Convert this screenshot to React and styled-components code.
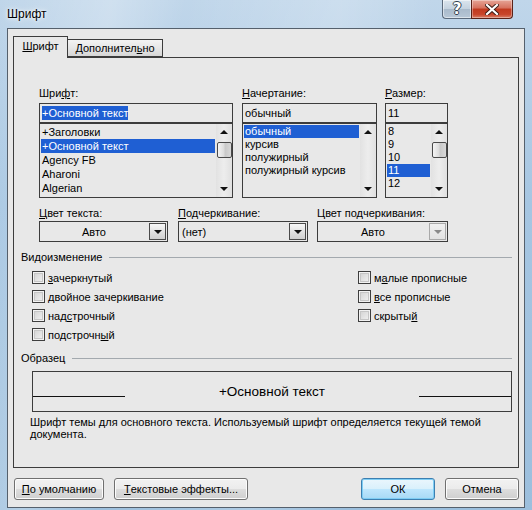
import React from "react";
import styled, { createGlobalStyle, css } from "styled-components";

const GlobalStyle = createGlobalStyle`
  html, body {
    margin: 0;
    padding: 0;
  }
  body {
    font-family: "Liberation Sans", Arial, sans-serif;
    font-size: 11px;
    color: #000;
  }
  * {
    box-sizing: border-box;
  }
`;

const BG = "#e8e8e8";
const DARK = "#3c3c3c";
const SEL = "#1f5fd3";

const fonts = ["+Заголовки", "+Основной текст", "Agency FB", "Aharoni", "Algerian"];
const styles = ["обычный", "курсив", "полужирный", "полужирный курсив"];
const sizes = ["8", "9", "10", "11", "12"];

const leftChecks = [
  ["", "з", "ачеркнутый"],
  ["", "д", "войное зачеркивание"],
  ["над", "с", "трочный"],
  ["подстрочн", "ы", "й"],
];
const rightChecks = [
  ["м", "а", "лые прописные"],
  ["", "в", "се прописные"],
  ["скрыты", "й", ""],
];

const Mn = ({ pre, key_, post }) => (
  <>
    {pre}
    <u>{key_}</u>
    {post}
  </>
);

const App = () => {
  return (
    <>
      <GlobalStyle />
      <Window>
        <TitleBar>
          <Title>Шрифт</Title>
          <CaptionButtons>
            <HelpButton>?</HelpButton>
            <CloseButton>
              <svg width="14" height="11" viewBox="0 0 14 11">
                <path
                  d="M2 1 L12 10 M12 1 L2 10"
                  stroke="#3a1a14"
                  strokeWidth="4"
                  strokeLinecap="square"
                />
                <path
                  d="M2 1 L12 10 M12 1 L2 10"
                  stroke="#fff"
                  strokeWidth="2.2"
                  strokeLinecap="square"
                />
              </svg>
            </CloseButton>
          </CaptionButtons>
        </TitleBar>

        <Client>
          <TabStrip>
            <Tab active>
              <u>Ш</u>рифт
            </Tab>
            <Tab>
              Дополнител<u>ь</u>но
            </Tab>
          </TabStrip>

          <Panel>
            <FontRow>
              <Column width={194}>
                <Label>
                  Шри<u>ф</u>т:
                </Label>
                <TextBox>
                  <Highlighted>+Основной текст</Highlighted>
                </TextBox>
                <ListBox>
                  <Items>
                    {fonts.map((f, i) => (
                      <Item key={f} selected={i === 1} rowHeight={14}>
                        {f}
                      </Item>
                    ))}
                  </Items>
                  <ScrollBar thumb />
                </ListBox>
              </Column>
              <Column width={135} gap={9}>
                <Label>
                  <u>Н</u>ачертание:
                </Label>
                <TextBox>обычный</TextBox>
                <ListBox>
                  <Items>
                    {styles.map((s, i) => (
                      <Item key={s} selected={i === 0} rowHeight={13}>
                        {s}
                      </Item>
                    ))}
                  </Items>
                  <ScrollBar />
                </ListBox>
              </Column>
              <Column width={63} gap={8}>
                <Label>
                  <u>Р</u>азмер:
                </Label>
                <TextBox>11</TextBox>
                <ListBox>
                  <Items>
                    {sizes.map((s) => (
                      <Item key={s} selected={s === "11"} rowHeight={13}>
                        {s}
                      </Item>
                    ))}
                  </Items>
                  <ScrollBar thumb />
                </ListBox>
              </Column>
            </FontRow>

            <ComboRow>
              <Column width={129}>
                <Label tight>
                  <u>Ц</u>вет текста:
                </Label>
                <Combo>
                  <ComboValue center>Авто</ComboValue>
                  <ComboArrow>
                    <Triangle />
                  </ComboArrow>
                </Combo>
              </Column>
              <Column width={130} gap={10}>
                <Label tight>
                  <u>П</u>одчеркивание:
                </Label>
                <Combo>
                  <ComboValue>(нет)</ComboValue>
                  <ComboArrow>
                    <Triangle />
                  </ComboArrow>
                </Combo>
              </Column>
              <Column width={131} gap={9}>
                <Label tight>Цвет подчеркивания:</Label>
                <Combo>
                  <ComboValue center>Авто</ComboValue>
                  <ComboArrow disabled>
                    <Triangle disabled />
                  </ComboArrow>
                </Combo>
              </Column>
            </ComboRow>

            <GroupHeader top={9}>
              <span>Видоизменение</span>
              <GroupLine />
            </GroupHeader>

            <Checks>
              <CheckColumn>
                {leftChecks.map(([a, b, c]) => (
                  <CheckRow key={a + b + c}>
                    <CheckBox />
                    <Mn pre={a} key_={b} post={c} />
                  </CheckRow>
                ))}
              </CheckColumn>
              <CheckColumn>
                {rightChecks.map(([a, b, c]) => (
                  <CheckRow key={a + b + c}>
                    <CheckBox />
                    <Mn pre={a} key_={b} post={c} />
                  </CheckRow>
                ))}
              </CheckColumn>
            </Checks>

            <GroupHeader top={8}>
              <span>Образец</span>
              <GroupLine />
            </GroupHeader>

            <Preview>
              <PreviewLine />
              <PreviewText>+Основной текст</PreviewText>
              <PreviewLine />
            </Preview>

            <Description>
              Шрифт темы для основного текста. Используемый шрифт определяется текущей темой
              <br />
              документа.
            </Description>
          </Panel>

          <ButtonRow>
            <Button width={90}>
              <u>П</u>о умолчанию
            </Button>
            <Button width={134}>
              <u>Т</u>екстовые эффекты...
            </Button>
            <Spacer />
            <Button width={74} primary>
              ОК
            </Button>
            <Button width={74}>Отмена</Button>
          </ButtonRow>
        </Client>
      </Window>
    </>
  );
};

export default App;

const Window = styled.div`
  width: 532px;
  height: 510px;
  display: flex;
  flex-direction: column;
  padding: 0 7px 2px 7px;
  background: linear-gradient(
      100deg,
      rgba(255, 255, 255, 0) 0%,
      rgba(255, 255, 255, 0.25) 18%,
      rgba(255, 255, 255, 0) 30%,
      rgba(255, 255, 255, 0.2) 55%,
      rgba(255, 255, 255, 0) 70%
    ),
    linear-gradient(to bottom, #c0d6ea 0%, #a6c6e2 40%, #9cbfdd 100%);
`;

const TitleBar = styled.div`
  height: 28px;
  display: flex;
  align-items: flex-start;
  justify-content: space-between;
  margin-right: 12px;
`;

const Title = styled.div`
  font-size: 12px;
  line-height: 14px;
  padding-top: 7px;
  color: #000;
  text-shadow: 0 0 6px rgba(255, 255, 255, 0.9), 0 0 3px #fff;
`;

const CaptionButtons = styled.div`
  display: flex;
  height: 19px;
`;

const captionBase = css`
  height: 19px;
  display: flex;
  align-items: center;
  justify-content: center;
  border: 1px solid #5b6a7c;
  border-top: none;
  font-weight: bold;
`;

const HelpButton = styled.div`
  ${captionBase};
  width: 29px;
  border-bottom-left-radius: 4px;
  border-right: none;
  background: linear-gradient(to bottom, #dbe5ee 0%, #c4d2df 50%, #a9bacb 51%, #b7c7d6 100%);
  color: #fff;
  font-size: 15px;
  font-family: "DejaVu Sans", sans-serif;
  text-shadow: -1px 0 #33404e, 1px 0 #33404e, 0 -1px #33404e, 0 1px #33404e;
  box-shadow: inset 0 0 0 1px rgba(255, 255, 255, 0.5);
`;

const CloseButton = styled.div`
  ${captionBase};
  width: 42px;
  border-color: #5a2219;
  border-bottom-right-radius: 4px;
  background: linear-gradient(to bottom, #e6a597 0%, #d6705d 45%, #c0391f 50%, #c8452b 80%, #d8806a 100%);
  box-shadow: inset 0 0 0 1px rgba(255, 255, 255, 0.35);
`;

const Client = styled.div`
  flex: 1;
  display: flex;
  flex-direction: column;
  background: ${BG};
  border: 1px solid #55606c;
  padding: 7px 5px 7px 5px;
`;

const TabStrip = styled.div`
  height: 21px;
  display: flex;
  align-items: flex-end;
  position: relative;
  z-index: 1;
`;

const Tab = styled.div`
  height: ${(p) => (p.active ? 22 : 18)}px;
  margin-bottom: ${(p) => (p.active ? -1 : 0)}px;
  width: ${(p) => (p.active ? 55 : 95)}px;
  border: 1px solid ${DARK};
  border-bottom: ${(p) => (p.active ? "none" : `1px solid ${DARK}`)};
  border-left: ${(p) => (p.active ? `1px solid ${DARK}` : "none")};
  background: ${(p) =>
    p.active ? BG : "linear-gradient(to bottom, #f3f3f3 0%, #e6e6e6 50%, #d6d6d6 100%)"};
  display: flex;
  align-items: center;
  justify-content: center;
  padding-bottom: ${(p) => (p.active ? 2 : 0)}px;
  line-height: 13px;
`;

const Panel = styled.div`
  height: 411px;
  border: 1px solid ${DARK};
  display: flex;
  flex-direction: column;
  padding: 29px 6px 0 7px;
`;

const FontRow = styled.div`
  display: flex;
  margin-left: 18px;
`;

const ComboRow = styled.div`
  display: flex;
  margin-left: 18px;
  margin-top: 9px;
`;

const Column = styled.div`
  width: ${(p) => p.width}px;
  margin-left: ${(p) => p.gap || 0}px;
  display: flex;
  flex-direction: column;
`;

const Label = styled.div`
  line-height: 13px;
  height: 13px;
  margin-bottom: ${(p) => (p.tight ? 1 : 3)}px;
  white-space: nowrap;
`;

const TextBox = styled.div`
  height: 20px;
  border: 1px solid ${DARK};
  display: flex;
  align-items: center;
  padding-left: 2px;
  white-space: nowrap;
`;

const Highlighted = styled.span`
  background: ${SEL};
  color: #fff;
  line-height: 14px;
`;

const ListBox = styled.div`
  height: 75px;
  border: 1px solid ${DARK};
  display: flex;
  overflow: hidden;
`;

const Items = styled.div`
  flex: 1;
  padding: 1px 1px 0 1px;
  display: flex;
  flex-direction: column;
  overflow: hidden;
`;

const Item = styled.div`
  height: ${(p) => p.rowHeight}px;
  line-height: ${(p) => p.rowHeight}px;
  padding-left: 1px;
  white-space: nowrap;
  background: ${(p) => (p.selected ? SEL : "transparent")};
  color: ${(p) => (p.selected ? "#fff" : "#000")};
  flex-shrink: 0;
`;

const ScrollBarTrack = styled.div`
  width: 16px;
  display: flex;
  flex-direction: column;
  align-items: center;
  background: linear-gradient(to right, #e2e2e2, #ededed 50%, #e0e0e0);
`;

const ArrowCell = styled.div`
  height: 16px;
  width: 100%;
  display: flex;
  align-items: center;
  justify-content: center;
`;

const ArrowUp = styled.div`
  width: 0;
  height: 0;
  border-left: 4px solid transparent;
  border-right: 4px solid transparent;
  border-bottom: 4px solid #111;
`;

const Triangle = styled.div`
  width: 0;
  height: 0;
  border-left: 4px solid transparent;
  border-right: 4px solid transparent;
  border-top: 4px solid ${(p) => (p.disabled ? "#8a8a8a" : "#111")};
`;

const Thumb = styled.div`
  width: 15px;
  height: 16px;
  border: 1px solid #4a4a4a;
  border-radius: 2px;
  background: linear-gradient(to right, #f4f4f4, #dcdcdc 45%, #c9c9c9 55%, #d8d8d8);
  margin-top: 2px;
`;

const ScrollGap = styled.div`
  flex: 1;
`;

const ScrollBar = ({ thumb }) => (
  <ScrollBarTrack>
    <ArrowCell>
      <ArrowUp />
    </ArrowCell>
    {thumb && <Thumb />}
    <ScrollGap />
    <ArrowCell>
      <Triangle />
    </ArrowCell>
  </ScrollBarTrack>
);

const Combo = styled.div`
  height: 21px;
  border: 1px solid ${DARK};
  display: flex;
`;

const ComboValue = styled.div`
  flex: 1;
  display: flex;
  align-items: center;
  justify-content: ${(p) => (p.center ? "center" : "flex-start")};
  padding-left: ${(p) => (p.center ? 0 : 3)}px;
`;

const ComboArrow = styled.div`
  width: 17px;
  margin: 1px;
  border: 1px solid ${(p) => (p.disabled ? "#a9a9a9" : "#4a4a4a")};
  background: ${(p) =>
    p.disabled
      ? "linear-gradient(to bottom, #f0f0f0, #e2e2e2)"
      : "linear-gradient(to bottom, #f6f6f6 0%, #e2e2e2 50%, #cfcfcf 100%)"};
  display: flex;
  align-items: center;
  justify-content: center;
`;

const GroupHeader = styled.div`
  display: flex;
  align-items: center;
  margin-top: ${(p) => p.top}px;
  line-height: 13px;
  height: 13px;
`;

const GroupLine = styled.div`
  flex: 1;
  height: 1px;
  background: #a3a9ae;
  margin-left: 7px;
`;

const Checks = styled.div`
  display: flex;
  margin-top: 4px;
  margin-left: 11px;
`;

const CheckColumn = styled.div`
  display: flex;
  flex-direction: column;
  &:first-child {
    width: 326px;
  }
`;

const CheckRow = styled.div`
  height: 19px;
  display: flex;
  align-items: center;
  white-space: nowrap;
`;

const CheckBox = styled.div`
  width: 13px;
  height: 13px;
  border: 1px solid #3e3e3e;
  margin-right: 3px;
  background: linear-gradient(135deg, #cfcfcf, #f5f5f5);
  box-shadow: inset 0 0 0 1px #f2f2f2, inset 0 0 0 2px #c6c6c6;
`;

const Preview = styled.div`
  height: 41px;
  margin-top: 6px;
  margin-left: 11px;
  border: 1px solid ${DARK};
  display: flex;
  align-items: center;
`;

const PreviewLine = styled.div`
  width: 92px;
  height: 1px;
  background: #111;
  margin-top: 10px;
`;

const PreviewText = styled.div`
  flex: 1;
  text-align: center;
  font-size: 13.5px;
  line-height: 16px;
`;

const Description = styled.div`
  margin-top: 4px;
  margin-left: 9px;
  line-height: 12px;
  white-space: nowrap;
`;

const ButtonRow = styled.div`
  display: flex;
  margin-top: 10px;
  gap: 10px;
  padding-left: 1px;
`;

const Spacer = styled.div`
  flex: 1;
`;

const Button = styled.div`
  width: ${(p) => p.width}px;
  height: 22px;
  border: 1px solid ${(p) => (p.primary ? "#3c7fb1" : "#707070")};
  border-radius: 3px;
  display: flex;
  align-items: center;
  justify-content: center;
  white-space: nowrap;
  background: ${(p) =>
    p.primary
      ? "linear-gradient(to bottom, #eaf6fd 0%, #d9f0fc 50%, #bee6fd 51%, #a7d9f5 100%)"
      : "linear-gradient(to bottom, #f2f2f2 0%, #ebebeb 50%, #dddddd 51%, #cfcfcf 100%)"};
  box-shadow: inset 0 0 0 1px ${(p) => (p.primary ? "#7ecdf4" : "#fcfcfc")};
`;
